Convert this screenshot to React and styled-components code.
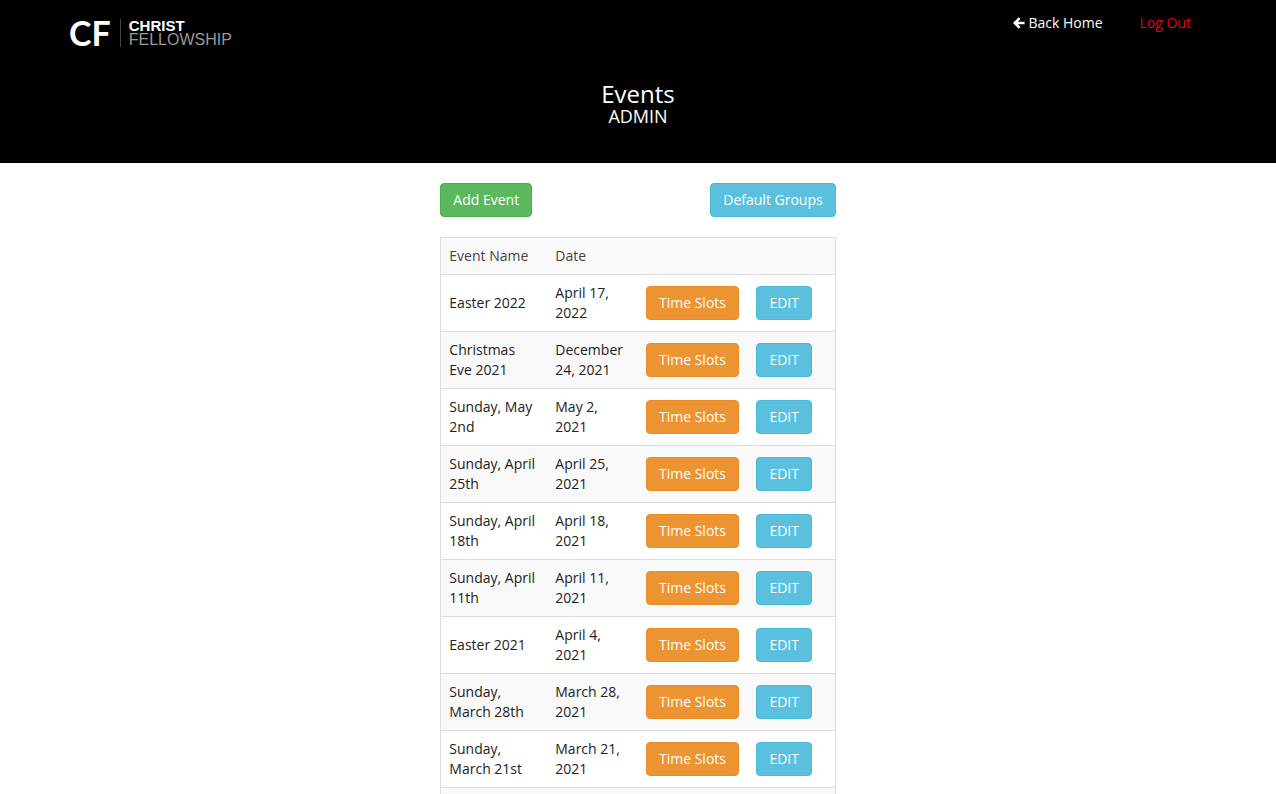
import React from "react";
import styled, { createGlobalStyle } from "styled-components";

const GlobalStyle = createGlobalStyle`
  * {
    box-sizing: border-box;
  }

  body {
    margin: 0;
    background: #fff;
    color: #222;
    font-family: "Open Sans", sans-serif;
    font-size: 14px;
    line-height: 20px;
  }
`;

const Header = styled.header`
  background: #000;
  color: #fff;
  padding-bottom: 37px;
`;

const Nav = styled.nav`
  max-width: 1170px;
  margin: 0 auto;
  padding: 13px 32px 0 16px;
  display: flex;
  justify-content: space-between;
  align-items: flex-start;
`;

const Logo = styled.a`
  display: flex;
  align-items: center;
  height: 40px;
  color: #fff;
  text-decoration: none;
`;

const Monogram = styled.span`
  font-family: Lato, sans-serif;
  font-size: 34px;
  font-weight: 700;
  line-height: 38px;
`;

const Wordmark = styled.span`
  display: flex;
  flex-direction: column;
  margin-left: 9px;
  padding-left: 8px;
  border-left: 1px solid #444;
  font-family: "Liberation Sans", Arial, sans-serif;
  line-height: 14px;
`;

const Christ = styled.span`
  font-size: 15px;
  font-weight: 700;
`;

const Fellowship = styled.span`
  font-size: 16px;
  color: #999;
`;

const Links = styled.div`
  display: flex;
  gap: 37px;
`;

const NavLink = styled.a`
  display: flex;
  align-items: center;
  gap: 3px;
  color: ${(props) => props.$color || "#fff"};
  text-decoration: none;
`;

const Heading = styled.div`
  margin-top: 29px;
  text-align: center;
`;

const Title = styled.h1`
  margin: 0;
  font-size: 24px;
  font-weight: 400;
  line-height: 24px;
`;

const Subtitle = styled.h2`
  margin: 0;
  font-size: 18px;
  font-weight: 400;
  line-height: 20px;
`;

const Main = styled.main`
  width: 33.333%;
  min-width: 420px;
  margin: 0 auto;
  padding: 20px 15px;
`;

const Toolbar = styled.div`
  display: flex;
  justify-content: space-between;
  margin-bottom: 20px;
`;

const colors = {
  success: ["#5cb85c", "#4cae4c"],
  info: ["#5bc0de", "#46b8da"],
  warning: ["#ec9332", "#e98c26"],
};

const Button = styled.button`
  display: block;
  padding: 6px 12px;
  border: 1px solid ${(props) => colors[props.$kind][1]};
  border-radius: 4px;
  background: ${(props) => colors[props.$kind][0]};
  color: #fff;
  font: inherit;
  white-space: nowrap;
  cursor: pointer;
`;

const Table = styled.table`
  width: 100%;
  table-layout: fixed;
  border: 1px solid #ddd;
  border-collapse: collapse;
`;

const Row = styled.tr`
  background: ${(props) => (props.$striped ? "#f9f9f9" : "#fff")};
`;

const Th = styled.th`
  width: ${(props) => props.$width};
  padding: 8px;
  color: #444;
  font-weight: 400;
  text-align: left;
`;

const Td = styled.td`
  padding: 8px;
  border-top: 1px solid #ddd;
  vertical-align: middle;
`;

const events = [
  ["Easter 2022", "April 17, 2022"],
  ["Christmas Eve 2021", "December 24, 2021"],
  ["Sunday, May 2nd", "May 2, 2021"],
  ["Sunday, April 25th", "April 25, 2021"],
  ["Sunday, April 18th", "April 18, 2021"],
  ["Sunday, April 11th", "April 11, 2021"],
  ["Easter 2021", "April 4, 2021"],
  ["Sunday, March 28th", "March 28, 2021"],
  ["Sunday, March 21st", "March 21, 2021"],
  ["Sunday, March 14th", "March 14, 2021"],
];

function BackArrow() {
  return (
    <svg width="12" height="12" viewBox="0 0 12 12" aria-hidden="true">
      <path
        d="M6.6 1.2 1.8 6l4.8 4.8M2.2 6H11.6"
        fill="none"
        stroke="#fff"
        strokeWidth="2.6"
      />
    </svg>
  );
}

function App() {
  return (
    <>
      <GlobalStyle />
      <Header>
        <Nav>
          <Logo href="#">
            <Monogram>CF</Monogram>
            <Wordmark>
              <Christ>CHRIST</Christ>
              <Fellowship>FELLOWSHIP</Fellowship>
            </Wordmark>
          </Logo>
          <Links>
            <NavLink href="#">
              <BackArrow />
              Back Home
            </NavLink>
            <NavLink href="#" $color="#e8000f">Log Out</NavLink>
          </Links>
        </Nav>
        <Heading>
          <Title>Events</Title>
          <Subtitle>ADMIN</Subtitle>
        </Heading>
      </Header>
      <Main>
        <Toolbar>
          <Button $kind="success">Add Event</Button>
          <Button $kind="info">Default Groups</Button>
        </Toolbar>
        <Table>
          <thead>
            <Row $striped>
              <Th scope="col" $width="27%">Event Name</Th>
              <Th scope="col" $width="23%">Date</Th>
              <Th $width="28%" aria-label="Time slots" />
              <Th $width="22%" aria-label="Edit" />
            </Row>
          </thead>
          <tbody>
            {events.map(([name, date], i) => (
              <Row key={date} $striped={i % 2 === 1}>
                <Td>{name}</Td>
                <Td>{date}</Td>
                <Td>
                  <Button $kind="warning">Time Slots</Button>
                </Td>
                <Td>
                  <Button $kind="info">EDIT</Button>
                </Td>
              </Row>
            ))}
          </tbody>
        </Table>
      </Main>
    </>
  );
}

export default App;
